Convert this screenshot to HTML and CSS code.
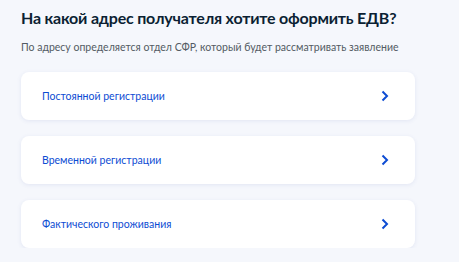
FILE: index.html
```html
<!DOCTYPE html>
<html lang="ru">
<head>
    <meta charset="UTF-8">
    <meta name="viewport" content="width=device-width, initial-scale=1.0">
    <title>Адрес получателя ЕДВ</title>
    <link rel="stylesheet" href="styles.css">
</head>
<body>
    <div class="page">
        <h1 class="title">На какой адрес получателя хотите оформить ЕДВ?</h1>
        <p class="subtitle">По адресу определяется отдел СФР, который будет рассматривать заявление</p>

        <div class="options">
            <a class="option" href="#">
                <span class="option-label">Постоянной регистрации</span>
                <svg class="chevron" width="8" height="12" viewBox="0 0 8 12"><path d="M1.5 1.5 L6 6 L1.5 10.5" fill="none" stroke="currentColor" stroke-width="2"/></svg>
            </a>
            <a class="option" href="#">
                <span class="option-label">Временной регистрации</span>
                <svg class="chevron" width="8" height="12" viewBox="0 0 8 12"><path d="M1.5 1.5 L6 6 L1.5 10.5" fill="none" stroke="currentColor" stroke-width="2"/></svg>
            </a>
            <a class="option" href="#">
                <span class="option-label">Фактического проживания</span>
                <svg class="chevron" width="8" height="12" viewBox="0 0 8 12"><path d="M1.5 1.5 L6 6 L1.5 10.5" fill="none" stroke="currentColor" stroke-width="2"/></svg>
            </a>
        </div>
    </div>
</body>
</html>
```

FILE: styles.css
```css
body {
    margin: 0;
    background-color: #f5f7fc;
    font-family: Lato, "Liberation Sans", sans-serif;
    color: #0b1f33;
}
.page {
    padding: 7px 0 0 21px;
}
.title {
    margin: 0;
    font-size: 16px;
    font-weight: bold;
    line-height: 22px;
    letter-spacing: -0.2px;
    white-space: nowrap;
}
.subtitle {
    margin: 10px 0 0;
    font-size: 10.5px;
    line-height: 16px;
    color: #535b63;
    white-space: nowrap;
}
.options {
    width: 394px;
    margin-top: 17px;
    display: flex;
    flex-direction: column;
    gap: 16px;
}
.option {
    height: 48px;
    display: flex;
    align-items: center;
    justify-content: space-between;
    padding: 0 26px 0 21px;
    background-color: #fff;
    border-radius: 8px;
    box-shadow: 0 1px 4px rgba(87, 111, 180, 0.12);
    text-decoration: none;
    color: #0d4cd3;
}
.option-label {
    font-size: 10.5px;
}
.chevron {
    display: block;
}
```
